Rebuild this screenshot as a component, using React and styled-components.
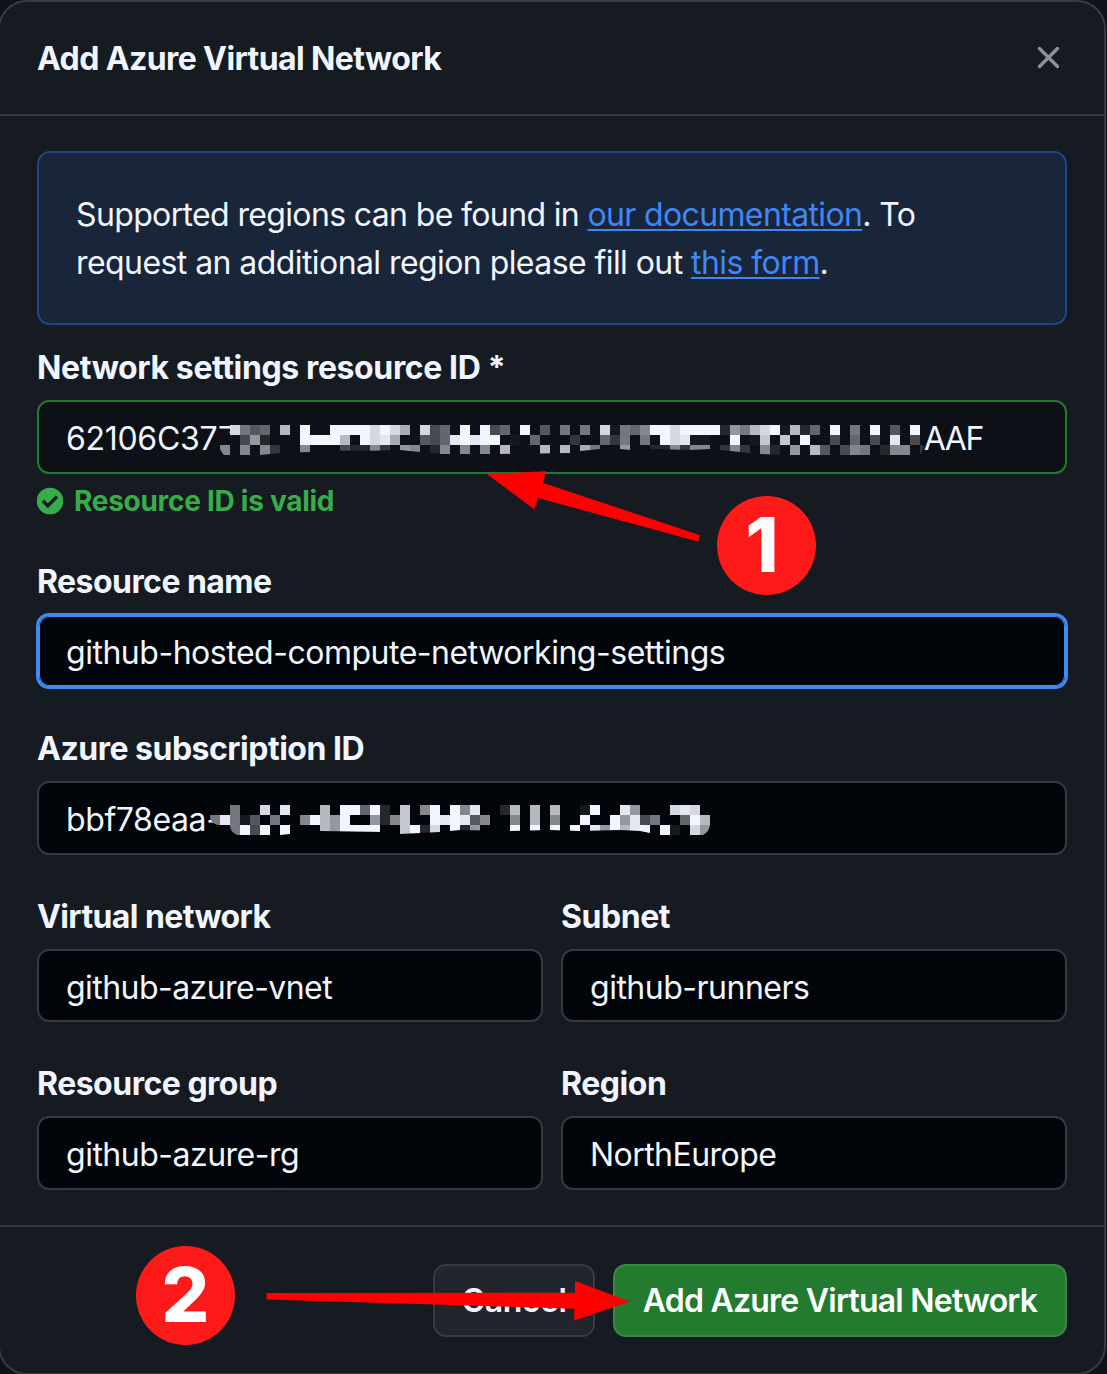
import React from "react";
import styled, { createGlobalStyle } from "styled-components";

const GlobalStyle = createGlobalStyle`
  *, *::before, *::after { box-sizing: border-box; }
  html, body { margin: 0; height: 1374px; overflow: hidden; background: #0e121a; }
  body { font-family: Inter, "Noto Sans", sans-serif; color: #f0f5ff; }
`;

const Page = styled.div`
  position: relative;
  width: 1107px;
  height: 1374px;
  overflow: hidden;
`;

const Dialog = styled.section`
  display: flex;
  flex-direction: column;
  width: 1108px;
  height: 1375px;
  margin-left: -2px;
  background: #161b22;
  border: 2px solid #363b43;
  border-radius: 29px;
`;

const Header = styled.header`
  display: flex;
  align-items: center;
  justify-content: space-between;
  height: 114px;
  padding: 0 44px 0 37px;
  border-bottom: 2px solid #363b43;
`;

const Title = styled.h1`
  margin: 2px 0 0;
  font-size: 32px;
  font-weight: 650;
  line-height: 48px;
  letter-spacing: ${(p) => p.$track}px;
`;

const CloseButton = styled.button`
  display: flex;
  margin-bottom: 2px;
  padding: 0;
  border: 0;
  background: none;
  color: #8b909a;
`;

const Body = styled.main`
  display: flex;
  flex-direction: column;
  padding: 35px 37px 35px;
`;

const Notice = styled.div`
  height: 174px;
  padding: 38px 37px 36px;
  margin-bottom: 25px;
  border: 2px solid #1e4683;
  border-radius: 13px;
  background: #192538;
  font-size: 32px;
  line-height: 48px;
`;

const NoticeLine = styled.div`
  white-space: nowrap;
  letter-spacing: ${(p) => p.$track}px;
`;

const Link = styled.a`
  color: #3f87f6;
  text-decoration: underline;
  text-decoration-thickness: 2px;
  text-underline-offset: 3px;
`;

const Field = styled.div`
  display: flex;
  flex-direction: column;
  margin-bottom: ${(p) => p.$after ?? 44}px;
`;

const FieldRow = styled.div`
  display: grid;
  grid-template-columns: 1fr 1fr;
  gap: 18px;
`;

const Label = styled.label`
  margin-bottom: 14px;
  font-size: 32px;
  font-weight: 650;
  line-height: 36px;
  white-space: nowrap;
  letter-spacing: ${(p) => p.$track ?? 0}px;
`;

const states = {
  plain: "border-color: #343a42; background: #02050a;",
  valid: "border-color: #23792f; background: #0d1117;",
  focus: "border-color: #3f8af5; background: #02050a; box-shadow: 0 0 0 1px #3f8af5, inset 0 0 0 1px #3f8af5;",
};

const Input = styled.div`
  position: relative;
  display: flex;
  align-items: center;
  height: ${(p) => (p.$tall ? 74 : 73)}px;
  padding: ${(p) => (p.$tall ? 3 : 4)}px 27px 0;
  border: 2px solid;
  border-radius: 12px;
  ${(p) => states[p.$state ?? "plain"]}
  font-size: 32px;
  line-height: 48px;
  white-space: nowrap;
  letter-spacing: ${(p) => p.$track ?? 0}px;
`;

const Suffix = styled.span`
  margin-left: auto;
  margin-right: 55px;
  letter-spacing: -1.4px;
`;

const MosaicSvg = styled.svg`
  position: absolute;
  left: ${(p) => p.$left}px;
  top: ${(p) => p.$top}px;
`;

const Validation = styled.div`
  display: flex;
  align-items: center;
  gap: 11px;
  height: 32px;
  margin-top: 11px;
  color: #37ad48;
  font-size: 28px;
  font-weight: 650;
  letter-spacing: ${(p) => p.$track}px;
`;

const Footer = styled.footer`
  display: flex;
  justify-content: flex-end;
  gap: 18px;
  padding: 37px 37px 0;
  border-top: 2px solid #363b43;
`;

const Button = styled.button`
  width: ${(p) => (p.$primary ? 454 : 162)}px;
  height: 73px;
  padding: 0;
  border: 2px solid ${(p) => (p.$primary ? "#3a8745" : "#353a43")};
  border-radius: 13px;
  background: ${(p) => (p.$primary ? "#237b2f" : "#21262d")};
  color: ${(p) => (p.$primary ? "#ffffff" : "#f0f5ff")};
  font: 560 32px Inter, "Noto Sans", sans-serif;
  letter-spacing: ${(p) => p.$track}px;
  white-space: nowrap;
`;

const Marker = styled.div`
  position: absolute;
  left: ${(p) => p.$x}px;
  top: ${(p) => p.$y}px;
  display: flex;
  align-items: center;
  justify-content: center;
  width: 99px;
  height: 99px;
  padding-right: ${(p) => p.$nudge ?? 0}px;
  padding-bottom: 2px;
  border-radius: 50%;
  background: #ff1a1a;
  color: #fff;
  font-size: 75px;
  font-weight: 800;
  line-height: 97px;
`;

const Arrows = styled.svg`
  position: absolute;
  left: 0;
  top: 0;
  pointer-events: none;
`;

const tones = {
  1: "#15181c", 2: "#24272c", 3: "#33363e", 4: "#474a51", 5: "#54575b",
  6: "#63666d", 7: "#74777d", 8: "#84878b", 9: "#94979e", a: "#a6adb1",
  b: "#b4babf", c: "#c3c7d0", d: "#d4d9e1", e: "#e2e7f1", f: "#f0f6ff",
};

const resourceRows = [
  "00d7560b0f00ffffdfda0d460f0f460f0507070d1768ffdffff297bdf1b260f070f050f0",
  "000492000ffffb0fdea00546efeff0106000300637070fde1100f01c0c0f00406040e040",
  "08080830080004228309802808080b000b0b0a7009002283880383082090b50487028803",
];
const subscriptionRows = [
  "000700d0e000b0ff6f20c08f0f8e002b0b0b001f00e9000ded0",
  "07e71507008fb9f00928c00fefe580080b0800f00f9e47006fb",
  "0007f4f0f000b9ffff00cf2d0f29000f0f0f0f0e9fbef0f10d9",
];

function Mosaic({ id, rows, outline, left, top, base }) {
  return (
    <MosaicSvg $left={left} $top={top} width={rows[0].length * 10} height="30" aria-hidden="true">
      <clipPath id={id}>
        <path d={outline} />
      </clipPath>
      {base && <path d={base} fill="#0d1117" />}
      <g clipPath={`url(#${id})`} shapeRendering="crispEdges">
        {rows.flatMap((row, y) =>
          [...row].map((tone, x) =>
            tone === "0" ? null : (
              <rect key={`${x}-${y}`} x={x * 10} y={y * 10} width="10" height="10" fill={tones[tone]} />
            )
          )
        )}
      </g>
    </MosaicSvg>
  );
}

export default function App() {
  return (
    <Page>
      <GlobalStyle />
      <Dialog>
        <Header>
          <Title $track={-0.6}>Add Azure Virtual Network</Title>
          <CloseButton aria-label="Close">
            <svg width="23" height="23" viewBox="0 0 23 23" fill="none" stroke="currentColor" strokeWidth="3.4" strokeLinecap="round">
              <path d="M2.5 2.5 20.5 20.5M20.5 2.5 2.5 20.5" />
            </svg>
          </CloseButton>
        </Header>
        <Body>
          <Notice>
            <NoticeLine $track={-0.64}>
              Supported regions can be found in <Link>our documentation</Link>. To
            </NoticeLine>
            <NoticeLine $track={-0.57}>
              request an additional region please fill out <Link>this form</Link>.
            </NoticeLine>
          </Notice>
          <Field $after={47}>
            <Label $track={-0.38}>Network settings resource ID *</Label>
            <Input $tall $state="valid" $track={-0.3}>
              62106C377
              <Mosaic
                id="resource-outline"
                rows={resourceRows}
                left={171}
                top={23}
                base="M8 8H30V0H712V20L704 30H8Z"
                outline="M18 0H712V20L714 22 710 30H575L550 29 520 26 500 24 480 25 445 24 420 25 410 24 390 24 370 26 360 28 290 29 230 29 190 25 150 26 110 25 100 27 70 28 50 30H14Q10 26 8 18Z"
              />
              <Suffix>AAF</Suffix>
            </Input>
            <Validation $track={-0.28}>
              <svg width="26" height="28" viewBox="0 0 26 28">
                <circle cx="13" cy="14" r="13.3" fill="#37ad48" />
                <path d="m5.8 13.8 5 5 9.2-9.2" fill="none" stroke="#161b22" strokeWidth="3.4" />
              </svg>
              Resource ID is valid
            </Validation>
          </Field>
          <Field $after={43}>
            <Label $track={-0.55}>Resource name</Label>
            <Input $tall $state="focus" $track={-0.48}>github-hosted-compute-networking-settings</Input>
          </Field>
          <Field>
            <Label $track={-0.5}>Azure subscription ID</Label>
            <Input $tall $track={-0.4}>
              bbf78eaa-
              <Mosaic
                id="subscription-outline"
                rows={subscriptionRows}
                left={161}
                top={22}
                outline="M18 0H510V20Q509 27 503 30H460L440 26 420 25 380 26 350 25 310 26 260 25 240 27 200 29 185 27 120 26 90 29 80 30H37Q30 27 30 20H18Q11 19 9 10H18Z"
              />
            </Input>
          </Field>
          <FieldRow>
            <Field>
              <Label $track={-0.6}>Virtual network</Label>
              <Input $track={-0.55}>github-azure-vnet</Input>
            </Field>
            <Field>
              <Label $track={-0.45}>Subnet</Label>
              <Input $track={-0.5}>github-runners</Input>
            </Field>
          </FieldRow>
          <FieldRow>
            <Field $after={0}>
              <Label $track={-0.5}>Resource group</Label>
              <Input $tall $track={-0.5}>github-azure-rg</Input>
            </Field>
            <Field $after={0}>
              <Label $track={-0.45}>Region</Label>
              <Input $tall $track={-0.55}>NorthEurope</Input>
            </Field>
          </FieldRow>
        </Body>
        <Footer>
          <Button $track={-0.45}>Cancel</Button>
          <Button $primary $track={-0.77}>Add Azure Virtual Network</Button>
        </Footer>
      </Dialog>
      <Marker $x={717} $y={496} $nudge={9}>1</Marker>
      <Marker $x={136} $y={1246}>2</Marker>
      <Arrows width="1107" height="1374" viewBox="0 0 1107 1374" fill="#ff0000" aria-hidden="true">
        <path d="M487 474 546 471.3 543 483 700 535.2 698 541.5 538 498 534.5 509.5Z" />
        <path d="M266.5 1293 575 1292.8V1281L630 1301.5 574 1320.6 574.5 1308.8 266.5 1299.5Z" />
      </Arrows>
    </Page>
  );
}
